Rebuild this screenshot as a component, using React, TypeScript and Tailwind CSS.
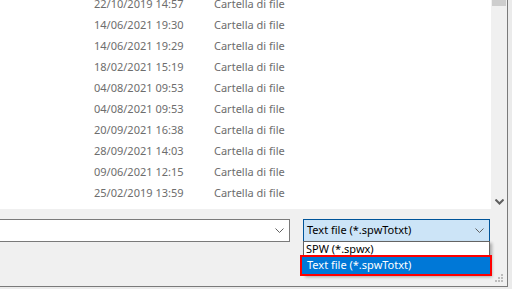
import React from "react";

const rows = [
  "22/10/2019 14:57",
  "14/06/2021 19:30",
  "14/06/2021 19:29",
  "18/02/2021 15:19",
  "04/08/2021 09:53",
  "04/08/2021 09:53",
  "20/09/2021 16:38",
  "28/09/2021 14:03",
  "09/06/2021 12:15",
  "25/02/2019 13:59",
];

const Chevron = ({ bold = false }: { bold?: boolean }) => (
  <svg width="9" height="6" viewBox="0 0 9 6" className="block">
    <path
      d="M0.5 0.5 L4.5 4.5 L8.5 0.5"
      fill="none"
      stroke="#606060"
      strokeWidth={bold ? 2 : 1}
    />
  </svg>
);

const App = () => {
  return (
    <div
      className="w-[512px] h-[289px] bg-[#ebebeb] overflow-hidden"
      style={{ fontFamily: "'Noto Sans', 'Open Sans', sans-serif" }}
    >
      <div className="relative w-[508px] h-[287px] border-r border-b border-[#7a7a7a] bg-[#f0f0f0] flex flex-col">
        {/* file list */}
        <div className="h-[209px] flex bg-white">
          <div className="flex-1 overflow-hidden">
            <div className="-mt-[6px]">
              {rows.map((d, i) => (
                <div key={i} className="h-[21px] flex items-center text-[11px] text-[#6d6d6d]">
                  <span className="ml-[94px] w-[120px]">{d}</span>
                  <span>Cartella di file</span>
                </div>
              ))}
            </div>
          </div>
          {/* scrollbar */}
          <div className="w-[16px] bg-[#f0f0f0] flex flex-col">
            <div className="h-[6px] mx-[1px] bg-[#cdcdcd]" />
            <div className="flex-1" />
            <div className="h-[17px] flex items-center justify-center pt-[2px]">
              <Chevron bold />
            </div>
          </div>
        </div>

        {/* filename + filter */}
        <div className="flex mt-[10px] h-[23px]">
          <div className="w-[290px] bg-white border border-l-0 border-[#7a7a7a] flex items-center justify-end pr-[5px]">
            <Chevron />
          </div>
          <div className="ml-[13px] w-[187px] bg-[#cce4f7] border border-[#005499] flex items-center justify-between pl-[3px] pr-[5px] text-[11px] text-black">
            <span>Text file (*.spwTotxt)</span>
            <Chevron />
          </div>
        </div>

        {/* dropdown list */}
        <div className="absolute left-[303px] top-[241px] w-[187px] bg-white border border-[#646464] shadow-[2px_2px_3px_rgba(0,0,0,0.3)] text-[11px]">
          <div className="h-[14px] flex items-center pl-[2px] text-black">SPW (*.spwx)</div>
          <div className="h-[18px]" />
        </div>
        <div className="absolute left-[300px] top-[255px] w-[192px] h-[21px] border-2 border-[#ff0000] bg-[#0078d7] flex items-center pl-[5px] text-[11px] text-white">
          Text file (*.spwTotxt)
        </div>

        {/* resize grip */}
        <svg width="10" height="10" viewBox="0 0 10 10" className="absolute right-[3px] bottom-[2px]">
          <rect x="7" y="0" width="2" height="2" fill="#bcbcbc" />
          <rect x="4" y="3" width="2" height="2" fill="#bcbcbc" />
          <rect x="7" y="3" width="2" height="2" fill="#bcbcbc" />
          <rect x="1" y="6" width="2" height="2" fill="#bcbcbc" />
          <rect x="4" y="6" width="2" height="2" fill="#bcbcbc" />
          <rect x="7" y="6" width="2" height="2" fill="#bcbcbc" />
        </svg>
      </div>
    </div>
  );
};

export default App;
